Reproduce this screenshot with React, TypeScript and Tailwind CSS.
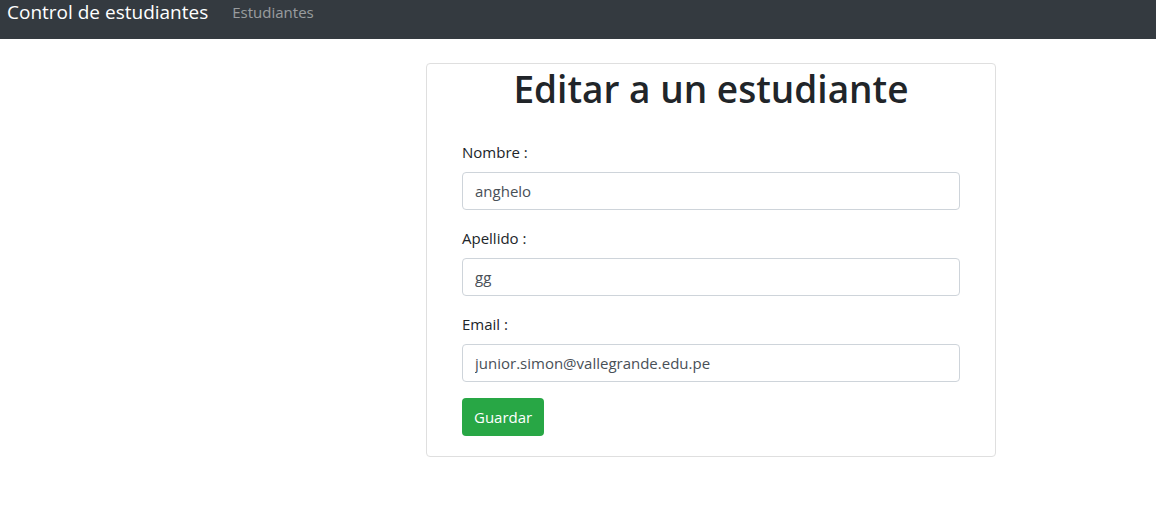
import React from 'react';

const Field = ({ label, value }: { label: string; value: string }) => (
  <div className="mb-4">
    <label className="mb-2 block text-[15px] leading-6 text-[#212529]">{label}</label>
    <input
      type="text"
      defaultValue={value}
      className="block h-[38px] w-full rounded border border-[#ced4da] bg-white px-3 text-[15px] text-[#495057] outline-none"
    />
  </div>
);

export default function App() {
  return (
    <div className="min-h-[510px] bg-white font-['Open_Sans',sans-serif]">
      {/* Navbar */}
      <nav className="flex h-[39px] items-start bg-[#343a40] pl-[7px]">
        <span className="mr-6 text-[19px] leading-[25px] text-white">Control de estudiantes</span>
        <a className="text-[15px] leading-[25px] text-white/50">Estudiantes</a>
      </nav>

      {/* Card */}
      <div className="ml-[426px] mt-6 w-[570px] rounded border border-[#dfdfdf] bg-white">
        <h1 className="mb-2 pt-[2px] text-center text-[37px] font-semibold leading-[46px] text-[#212529]">
          Editar a un estudiante
        </h1>
        <form className="px-[35px] pb-5 pt-5">
          <Field label="Nombre :" value="anghelo" />
          <Field label="Apellido :" value="gg" />
          <Field label="Email :" value="junior.simon@vallegrande.edu.pe" />
          <button
            type="button"
            className="h-[38px] rounded bg-[#28a745] px-3 text-[15px] text-white"
          >
            Guardar
          </button>
        </form>
      </div>
    </div>
  );
}
